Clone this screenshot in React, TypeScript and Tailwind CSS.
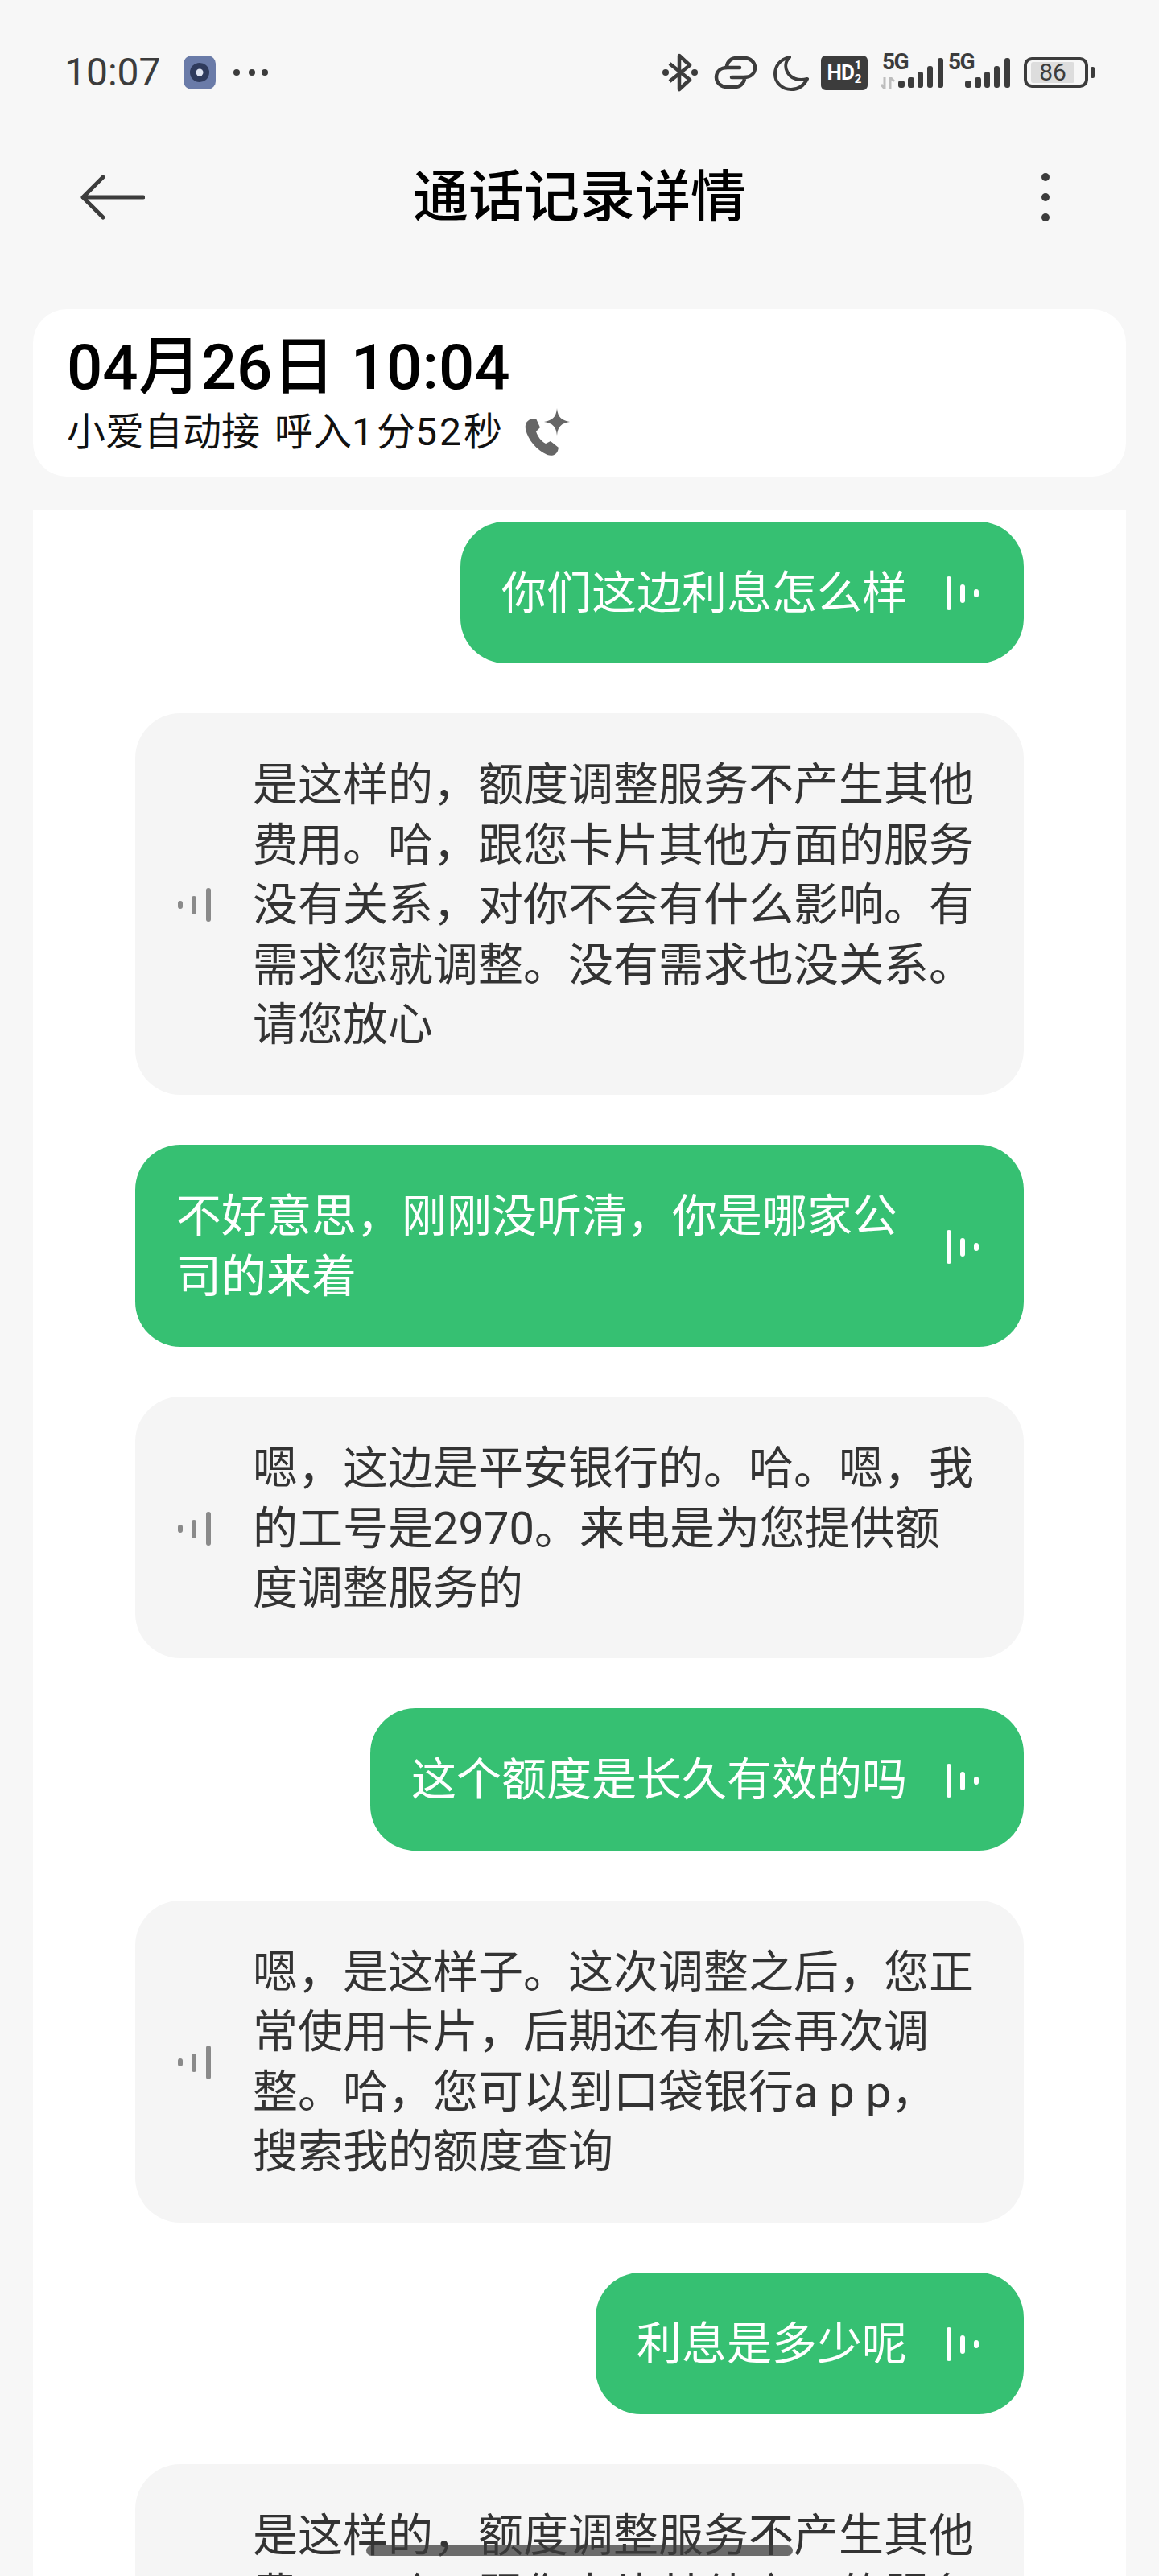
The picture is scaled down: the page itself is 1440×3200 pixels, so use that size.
import React from 'react';

const messages = [
  { mine: true, lines: ['你们这边利息怎么样'] },
  {
    mine: false,
    lines: [
      '是这样的，额度调整服务不产生其他',
      '费用。哈，跟您卡片其他方面的服务',
      '没有关系，对你不会有什么影响。有',
      '需求您就调整。没有需求也没关系。',
      '请您放心',
    ],
  },
  { mine: true, lines: ['不好意思，刚刚没听清，你是哪家公', '司的来着'] },
  {
    mine: false,
    lines: ['嗯，这边是平安银行的。哈。嗯，我', '的工号是2970。来电是为您提供额', '度调整服务的'],
  },
  { mine: true, lines: ['这个额度是长久有效的吗'] },
  {
    mine: false,
    lines: [
      '嗯，是这样子。这次调整之后，您正',
      '常使用卡片，后期还有机会再次调',
      '整。哈，您可以到口袋银行a p p，',
      '搜索我的额度查询',
    ],
  },
  { mine: true, lines: ['利息是多少呢'] },
  {
    mine: false,
    clipped: true, // runs off the bottom of the screen, its icon is below the fold
    lines: ['是这样的，额度调整服务不产生其他', '费用。哈，跟您卡片其他方面的服务'],
  },
];

function VoiceBars({ mine }: { mine: boolean }) {
  return (
    <svg width="44" height="46" viewBox="0 0 44 46" className="shrink-0">
      {mine ? (
        <g fill="#ffffff">
          <rect x="1" y="2" width="6" height="42" rx="3" />
          <rect x="18" y="12" width="6" height="23" rx="3" />
          <rect x="35" y="18" width="6" height="10" rx="3" />
        </g>
      ) : (
        <g fill="#8a8a8a">
          <rect x="3" y="18" width="6" height="10" rx="3" />
          <rect x="20" y="12" width="6" height="23" rx="3" />
          <rect x="38" y="2" width="6" height="42" rx="3" />
        </g>
      )}
    </svg>
  );
}

function Bubble({ mine, lines, clipped }: { mine: boolean; lines: string[]; clipped?: boolean }) {
  return (
    <div
      className={`flex items-center rounded-[56px] pt-[52px] pb-[50px] text-[56px] leading-[74.4px] whitespace-nowrap ${
        mine
          ? 'self-end gap-[48px] bg-[#36c072] pl-[51px] pr-[53px] text-white'
          : 'w-[1104px] gap-[52px] bg-[#f5f5f5] pl-[50px] text-[#333333]'
      } ${lines.length > 1 && mine ? 'w-[1104px] justify-between' : ''}`}
    >
      {!mine && (clipped ? <div className="w-[44px] shrink-0" /> : <VoiceBars mine={false} />)}
      <div>
        {lines.map((line) => (
          <div key={line}>{line}</div>
        ))}
      </div>
      {mine && <VoiceBars mine />}
    </div>
  );
}

function SignalBars() {
  return (
    <svg width="56" height="37" viewBox="0 0 56 37" className="absolute right-0 bottom-[3px]">
      <g fill="#3c3c3c">
        <rect x="0" y="28" width="8" height="9" rx="3" />
        <rect x="12" y="24" width="8" height="13" rx="3" />
        <rect x="24" y="17" width="7" height="20" rx="3" />
        <rect x="36" y="10" width="7" height="27" rx="3" />
        <rect x="49" y="0" width="7" height="37" rx="3" />
      </g>
    </svg>
  );
}

function StatusBar() {
  return (
    <div className="flex h-[100px] mt-[40px] items-center justify-between pl-[80px] pr-[80px] text-[#3c3c3c]">
      <div className="flex items-center">
        <span className="text-[48px] leading-none w-[148px]">10:07</span>
        <svg width="40" height="42" viewBox="0 0 40 42">
          <rect width="40" height="42" rx="10" fill="#6a7ba8" />
          <circle cx="20" cy="21" r="12" fill="#2f3b5c" />
          <circle cx="20" cy="21" r="4.5" fill="#dfe4f0" />
        </svg>
        <svg width="44" height="10" viewBox="0 0 44 10" className="ml-[21px]">
          <g fill="#3c3c3c">
            <circle cx="5" cy="5" r="4" />
            <circle cx="24" cy="5" r="4" />
            <circle cx="40" cy="5" r="4" />
          </g>
        </svg>
      </div>
      <div className="flex items-center">
        <svg width="46" height="48" viewBox="0 0 46 48">
          <path
            d="M10 13 L35 33 L22 45 L22 3 L35 15 L10 35"
            fill="none"
            stroke="#3c3c3c"
            strokeWidth="4.5"
            strokeLinejoin="round"
          />
          <circle cx="5" cy="24" r="4" fill="#3c3c3c" />
          <circle cx="41" cy="24" r="4" fill="#3c3c3c" />
        </svg>
        <svg width="54" height="42" viewBox="0 0 54 42" className="ml-[19px]">
          <path
            d="M22 27 H37 C46 27 51 22 51 15 C51 8 45 3 38 3 H28 C22 3 17 7 16 13 M32 15 H17 C8 15 3 20 3 27 C3 34 9 39 16 39 H26 C32 39 37 35 38 29"
            fill="none"
            stroke="#3c3c3c"
            strokeWidth="4.5"
            strokeLinecap="round"
          />
        </svg>
        <svg width="44" height="45" viewBox="0 0 44 45" className="ml-[20px]">
          <path
            d="M20 3 C8 6 2 14 2 24 C2 35 11 43 22 43 C31 43 38 38 42 30 C30 33 21 29 17 21 C14 15 15 8 20 3 Z"
            fill="none"
            stroke="#3c3c3c"
            strokeWidth="4"
            strokeLinejoin="round"
          />
        </svg>
        <div className="ml-[15px] flex h-[43px] w-[58px] items-center justify-center rounded-[6px] bg-[#3c3c3c] text-white font-bold">
          <span className="text-[26px] leading-none tracking-[-1px]">HD</span>
          <span className="ml-[1px] flex flex-col text-[15px] leading-[17px]">
            <span>1</span>
            <span>2</span>
          </span>
        </div>
        <div className="relative ml-[16px] h-[44px] w-[78px]">
          <span className="absolute left-[2px] top-[-5px] text-[28px] leading-none font-bold tracking-[-1.5px]">5G</span>
          <svg width="18" height="14" viewBox="0 0 18 14" className="absolute left-0 top-[28px]">
            <path d="M5 0 V14 M5 14 L1 9 M12 14 V0 M12 0 L17 5" stroke="#bdbdbd" strokeWidth="3" fill="none" />
          </svg>
          <SignalBars />
        </div>
        <div className="relative ml-[6px] h-[44px] w-[77px]">
          <span className="absolute left-0 top-[-5px] text-[28px] leading-none font-bold tracking-[-1.5px]">5G</span>
          <SignalBars />
        </div>
        <div className="ml-[17px] flex items-center">
          <div className="flex h-[38px] w-[80px] items-center rounded-[10px] border-[4px] border-[#3c3c3c] p-[2px] pl-[5px]">
            <div className="flex h-full w-[54px] items-center justify-center rounded-[3px] bg-[#dddddd] text-[30px] leading-none">
              86
            </div>
          </div>
          <div className="ml-[3px] h-[14px] w-[5px] rounded-[2px] bg-[#3c3c3c]" />
        </div>
      </div>
    </div>
  );
}

function NavBar() {
  return (
    <div className="flex h-[130px] mt-[40px] items-center px-[100px]">
      <div className="flex-1">
        <svg width="80" height="56" viewBox="0 0 80 56">
          <path
            d="M78 28 H3 M28 3 L3 28 L28 53"
            fill="none"
            stroke="#3c3c3c"
            strokeWidth="5"
            strokeLinecap="round"
            strokeLinejoin="round"
          />
        </svg>
      </div>
      <h1 className="text-[69px] leading-none font-medium text-black">通话记录详情</h1>
      <div className="flex flex-1 justify-end">
        <svg width="10" height="60" viewBox="0 0 10 60" className="mr-[36px]">
          <g fill="#3c3c3c">
            <circle cx="5" cy="5" r="5" />
            <circle cx="5" cy="30" r="5" />
            <circle cx="5" cy="55" r="5" />
          </g>
        </svg>
      </div>
    </div>
  );
}

function CallCard() {
  return (
    <div className="mx-[41px] mt-[74px] flex h-[208px] flex-col justify-center rounded-[42px] bg-white pl-[42px] pt-[6px]">
      <div className="text-[78px] leading-[84px] font-medium text-black">04月26日 10:04</div>
      <div className="mt-[8px] flex items-center text-[48px] leading-[60px] text-[#111111]">
        <span>
          小爱自动接<span className="ml-[6px]"> 呼入</span>
          <span className="tracking-[4px]">1</span>分<span className="tracking-[3px]">52</span>秒
        </span>
        <svg width="58" height="60" viewBox="0 0 58 60" className="ml-[28px]">
          <path
            d="M7 14 C2 16 0 20 1 26 C4 40 15 52 28 58 C34 60 39 58 41 53 L42 49 L32 41 L26 44 C20 41 16 35 14 29 L19 24 L14 13 Z"
            fill="#666666"
          />
          <path d="M40 0 C41 11 45 15 56 17 C45 19 41 23 40 34 C39 23 35 19 24 17 C35 15 39 11 40 0 Z" fill="#666666" />
        </svg>
      </div>
    </div>
  );
}

export default function App() {
  return (
    <div className="relative h-[3200px] w-[1440px] overflow-hidden bg-[#f7f7f7] font-['Roboto','Noto_Sans_CJK_SC',sans-serif]">
      <StatusBar />
      <NavBar />
      <CallCard />
      <div className="mx-[41px] mt-[41px] flex flex-col items-start gap-[62px] bg-white pl-[127px] pr-[127px] pt-[15px]">
        {messages.map((m) => (
          <Bubble key={m.lines[0] + m.mine + m.lines.length} mine={m.mine} lines={m.lines} clipped={m.clipped} />
        ))}
      </div>
      <div className="absolute left-[455px] top-[3162px] h-[13px] w-[530px] rounded-full bg-[#3c3c3c]/75" />
    </div>
  );
}
